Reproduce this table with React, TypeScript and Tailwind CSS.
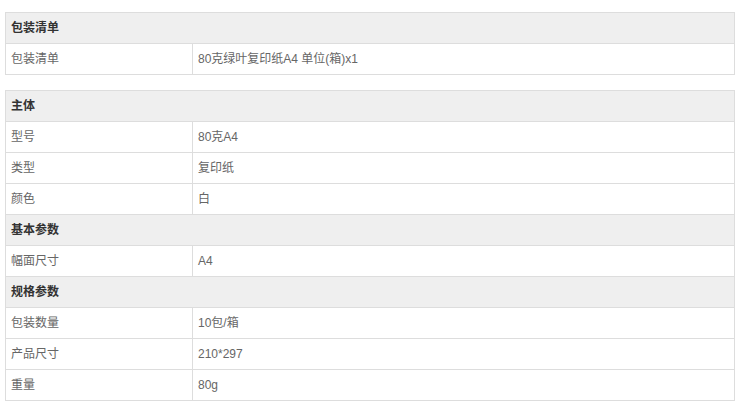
type Row = { label: string; value?: string };

const groups: Row[][] = [
  [{ label: '包装清单' }, { label: '包装清单', value: '80克绿叶复印纸A4 单位(箱)x1' }],
  [
    { label: '主体' },
    { label: '型号', value: '80克A4' },
    { label: '类型', value: '复印纸' },
    { label: '颜色', value: '白' },
    { label: '基本参数' },
    { label: '幅面尺寸', value: 'A4' },
    { label: '规格参数' },
    { label: '包装数量', value: '10包/箱' },
    { label: '产品尺寸', value: '210*297' },
    { label: '重量', value: '80g' },
  ],
];

function SpecRow({ row, first }: { row: Row; first: boolean }) {
  const border = first ? 'h-[30px]' : 'h-[31px] border-t border-[#dddddd]';
  if (row.value === undefined) {
    return (
      <div className={`flex items-center bg-[#efefef] pl-[5px] font-bold text-[#333] ${border}`}>
        {row.label}
      </div>
    );
  }
  return (
    <div className={`flex items-stretch text-[#666] ${border}`}>
      <div className="flex w-[187px] shrink-0 items-center border-r border-[#dddddd] pl-[5px]">{row.label}</div>
      <div className="flex flex-1 items-center pl-[5px]">{row.value}</div>
    </div>
  );
}

export default function App() {
  return (
    <div
      className="min-h-screen bg-white pt-[12px] text-[12px]"
      style={{ fontFamily: '"Liberation Sans", "Noto Sans CJK SC", sans-serif' }}
    >
      <div className="ml-[5px] flex w-[730px] flex-col gap-[15px]">
        {groups.map((rows, gi) => (
          <div key={gi} className="border border-[#dddddd]">
            {rows.map((row, i) => (
              <SpecRow key={i} row={row} first={i === 0} />
            ))}
          </div>
        ))}
      </div>
    </div>
  );
}
